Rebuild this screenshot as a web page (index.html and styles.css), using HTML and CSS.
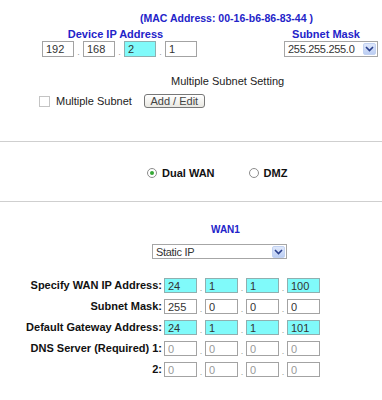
FILE: index.html
```html
<!DOCTYPE html>
<html lang="en">
<head>
  <meta charset="UTF-8">
  <title>LAN / WAN Setup</title>
  <link rel="stylesheet" href="styles.css">
</head>
<body>

  <div class="lan">
    <div class="mac">(MAC Address: 00-16-b6-86-83-44 )</div>

    <div class="lan-row">
      <div class="ip-col">
        <div class="head">Device IP Address</div>
        <div class="ip">
          <input class="octet" type="text" value="192"><span class="dot">.</span>
          <input class="octet" type="text" value="168"><span class="dot">.</span>
          <input class="octet hl" type="text" value="2"><span class="dot">.</span>
          <input class="octet" type="text" value="1">
        </div>
      </div>
      <div class="mask-col">
        <div class="head">Subnet Mask</div>
        <div class="select mask-select">
          <span class="select-text">255.255.255.0</span>
          <span class="select-btn"><svg width="9" height="6" viewBox="0 0 9 6"><path d="M1 1 L4.5 4.5 L8 1" fill="none" stroke="#2a3f8c" stroke-width="1.6"/></svg></span>
        </div>
      </div>
    </div>

    <div class="multi-title">Multiple Subnet Setting</div>
    <div class="multi-row">
      <span class="check"></span>
      <span class="multi-label">Multiple Subnet</span>
      <button class="btn" type="button">Add / Edit</button>
    </div>
  </div>

  <div class="divider first"></div>

  <div class="mode">
    <span class="radio on"></span><span class="radio-label">Dual WAN</span>
    <span class="radio second"></span><span class="radio-label">DMZ</span>
  </div>

  <div class="divider"></div>

  <div class="wan">
    <div class="wan-title">WAN1</div>
    <div class="select type-select">
      <span class="select-text">Static IP</span>
      <span class="select-btn"><svg width="9" height="6" viewBox="0 0 9 6"><path d="M1 1 L4.5 4.5 L8 1" fill="none" stroke="#2a3f8c" stroke-width="1.6"/></svg></span>
    </div>

    <div class="wan-grid">
      <label class="field-label">Specify WAN IP Address:</label>
      <div class="ip">
        <input class="octet hl" type="text" value="24"><span class="dot">.</span>
        <input class="octet hl" type="text" value="1"><span class="dot">.</span>
        <input class="octet hl" type="text" value="1"><span class="dot">.</span>
        <input class="octet hl" type="text" value="100">
      </div>

      <label class="field-label">Subnet Mask:</label>
      <div class="ip">
        <input class="octet" type="text" value="255"><span class="dot">.</span>
        <input class="octet" type="text" value="0"><span class="dot">.</span>
        <input class="octet" type="text" value="0"><span class="dot">.</span>
        <input class="octet" type="text" value="0">
      </div>

      <label class="field-label">Default Gateway Address:</label>
      <div class="ip">
        <input class="octet hl" type="text" value="24"><span class="dot">.</span>
        <input class="octet hl" type="text" value="1"><span class="dot">.</span>
        <input class="octet hl" type="text" value="1"><span class="dot">.</span>
        <input class="octet hl" type="text" value="101">
      </div>

      <label class="field-label">DNS Server (Required) 1:</label>
      <div class="ip">
        <input class="octet dim" type="text" value="0"><span class="dot">.</span>
        <input class="octet dim" type="text" value="0"><span class="dot">.</span>
        <input class="octet dim" type="text" value="0"><span class="dot">.</span>
        <input class="octet dim" type="text" value="0">
      </div>

      <label class="field-label">2:</label>
      <div class="ip">
        <input class="octet dim" type="text" value="0"><span class="dot">.</span>
        <input class="octet dim" type="text" value="0"><span class="dot">.</span>
        <input class="octet dim" type="text" value="0"><span class="dot">.</span>
        <input class="octet dim" type="text" value="0">
      </div>
    </div>
  </div>

</body>
</html>
```

FILE: styles.css
```css
/* General Reset */
* {
  margin: 0;
  padding: 0;
  box-sizing: border-box;
}

body {
  font-family: "Liberation Sans", Arial, sans-serif;
  font-size: 11px;
  color: #111;
  background-color: #fff;
  width: 382px;
}

/* LAN block */
.lan {
  padding-top: 12px;
}

.mac {
  padding-left: 140px;
  font-size: 10.5px;
  line-height: 12px;
  font-weight: bold;
  color: #2323c9;
}

.lan-row {
  display: flex;
  justify-content: space-between;
  padding: 0 4px 0 42px;
  margin-top: 4px;
}

.head {
  text-align: center;
  font-weight: bold;
  line-height: 13px;
  color: #2323c9;
}

.ip-col .head {
  padding-right: 8px;
}

.mask-col {
  width: 94px;
}

.mask-col .head {
  padding-right: 10px;
}

/* IP octet inputs */
.ip {
  display: flex;
  align-items: flex-end;
}

.octet {
  width: 32px;
  height: 16px;
  padding: 0 3px;
  border: 1px solid #a3a3a3;
  background-color: #fff;
  font-family: "Liberation Sans", Arial, sans-serif;
  font-size: 11px;
  color: #333;
  outline: none;
}

.octet.hl {
  background-color: #80fafa;
  border-color: #8fb0b0;
}

.octet.dim {
  color: #999;
}

.dot {
  width: 9px;
  text-align: center;
  font-size: 9px;
  line-height: 10px;
  color: #999;
}

/* fake select box */
.select {
  display: flex;
  align-items: center;
  justify-content: space-between;
  height: 16px;
  border: 1px solid #a6a6a6;
  background-color: #fff;
  padding: 0 1px 0 3px;
}

.select-text {
  font-size: 11px;
  letter-spacing: -0.3px;
  color: #333;
}

.select-btn {
  display: flex;
  align-items: center;
  justify-content: center;
  width: 13px;
  height: 12px;
  background: linear-gradient(#dfe8fb, #bccef3);
  border: 1px solid #c2d2f2;
  border-radius: 2px;
}

/* multiple subnet */
.multi-title {
  margin-top: 18px;
  padding-left: 171px;
  line-height: 13px;
  color: #222;
}

.multi-row {
  display: flex;
  align-items: center;
  margin-top: 6px;
  padding-left: 39px;
  height: 14px;
}

.check {
  width: 11px;
  height: 11px;
  border: 1px solid #c4c4c4;
  background-color: #fff;
}

.multi-label {
  margin-left: 6px;
  color: #222;
}

.btn {
  margin-left: 12px;
  width: 61px;
  height: 14px;
  border: 1px solid #777;
  border-radius: 3px;
  background: linear-gradient(#fff, #e9e8e2);
  font-family: "Liberation Sans", Arial, sans-serif;
  font-size: 11px;
  line-height: 12px;
  color: #444;
}

/* separators */
.divider {
  border-top: 1px solid #cfcfcf;
}

.divider.first {
  margin-top: 33px;
}

/* Dual WAN / DMZ */
.mode {
  display: flex;
  align-items: center;
  height: 59px;
  padding-left: 147px;
  padding-top: 2px;
}

.radio {
  width: 10px;
  height: 10px;
  border: 1px solid #8c8c8c;
  border-radius: 50%;
  background-color: #fff;
  position: relative;
}

.radio.on::after {
  content: "";
  position: absolute;
  left: 2px;
  top: 2px;
  width: 4px;
  height: 4px;
  border-radius: 50%;
  background-color: #35a835;
}

.radio.second {
  margin-left: 34px;
}

.radio-label {
  margin-left: 5px;
  font-weight: bold;
  color: #111;
}

/* WAN1 block */
.wan-title {
  margin-top: 22px;
  padding-left: 211px;
  font-size: 10px;
  line-height: 12px;
  font-weight: bold;
  color: #2323c9;
}

.type-select {
  margin: 8px 0 0 152px;
  width: 135px;
  height: 15px;
}

.wan-grid {
  display: grid;
  grid-template-columns: 162px auto;
  column-gap: 2px;
  row-gap: 6px;
  margin-top: 19px;
}

.field-label {
  text-align: right;
  font-weight: bold;
  line-height: 15px;
  color: #111;
}

.wan-grid .octet {
  width: 33px;
  height: 15px;
}

.wan-grid .dot {
  width: 8px;
}
```
